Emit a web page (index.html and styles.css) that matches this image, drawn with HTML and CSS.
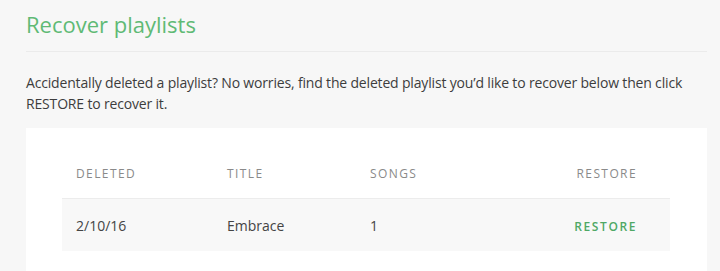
FILE: index.html
```html
<!DOCTYPE html>
<html lang="en">
<head>
<meta charset="utf-8">
<title>Recover playlists</title>
<link rel="stylesheet" href="styles.css">
</head>
<body>
<main class="page">
  <h1 class="title">Recover playlists</h1>
  <p class="intro">Accidentally deleted a playlist? No worries, find the deleted playlist you’d like to recover below then click RESTORE to recover it.</p>
  <section class="card">
    <div class="table">
      <div class="row head">
        <div class="cell">DELETED</div>
        <div class="cell">TITLE</div>
        <div class="cell">SONGS</div>
        <div class="cell end">RESTORE</div>
      </div>
      <div class="row body">
        <div class="cell">2/10/16</div>
        <div class="cell">Embrace</div>
        <div class="cell">1</div>
        <div class="cell end"><a class="restore" href="#">RESTORE</a></div>
      </div>
    </div>
  </section>
</main>
</body>
</html>
```

FILE: styles.css
```css
html, body {
  margin: 0;
  padding: 0;
  background: #f7f7f7;
}
body {
  font-family: "Open Sans", "Liberation Sans", sans-serif;
  color: #3a3a3a;
}
.page {
  padding: 0 13px 0 26px;
}
.title {
  margin: 0;
  padding: 9px 0 11px;
  font-size: 22px;
  line-height: 31px;
  font-weight: 400;
  color: #5fba75;
  border-bottom: 1px solid #ebebeb;
}
.intro {
  margin: 20px 0 0;
  font-size: 14px;
  line-height: 21px;
  letter-spacing: -0.17px;
  color: #3d3d3d;
}
.card {
  margin-top: 14px;
  background: #fff;
  padding: 20px 37px 20px 36px;
}
.row {
  display: grid;
  grid-template-columns: 151px 143px 1fr auto;
  align-items: center;
}
.cell {
  padding-left: 14px;
}
.cell.end {
  padding-right: 33px;
  text-align: right;
}
.head {
  height: 50px;
  border-bottom: 1px solid #ececec;
  font-size: 12px;
  letter-spacing: 1.4px;
  color: #8a8a8a;
}
.body {
  height: 52px;
  background: #f8f8f8;
  font-size: 14px;
  color: #444;
}
.restore {
  color: #4fa865;
  text-decoration: none;
  font-size: 12px;
  font-weight: 600;
  letter-spacing: 1.6px;
}
```
